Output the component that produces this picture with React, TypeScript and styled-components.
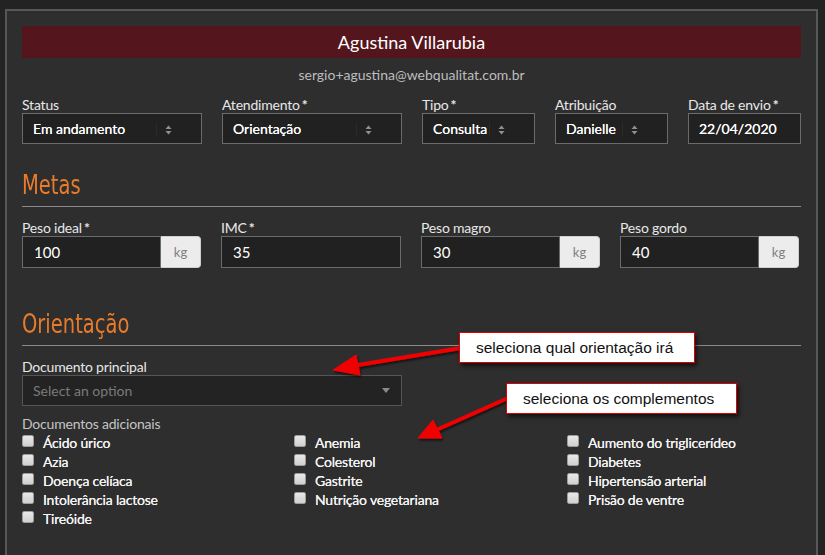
import React from "react";
import styled, { createGlobalStyle } from "styled-components";

const GlobalStyle = createGlobalStyle`
  html, body {
    margin: 0;
    padding: 0;
    background: #232323;
    font-family: Lato, "Open Sans", sans-serif;
    color: #e6e6e6;
  }
`;

const Page = styled.div`
  position: relative;
  padding: 9px 7px 0 5px;
  height: 555px;
  box-sizing: border-box;
  overflow: hidden;
`;

const Panel = styled.div`
  background: #2e2e2e;
  border: 2px solid #575757;
  border-bottom: none;
  padding: 15px 15px 40px;
  height: 600px;
  box-sizing: border-box;
`;

const NameBar = styled.div`
  height: 32px;
  background: #54161c;
  color: #fff;
  font-size: 18px;
  display: flex;
  align-items: center;
  justify-content: center;
`;

const Email = styled.div`
  text-align: center;
  font-size: 14px;
  color: #bdbdbd;
  margin-top: 9px;
  line-height: 16px;
`;

const FieldGrid = styled.div<{ $cols: string; $top: number }>`
  display: grid;
  grid-template-columns: ${({ $cols }) => $cols};
  column-gap: 20px;
  margin-top: ${({ $top }) => $top}px;
`;

const Field = styled.div<{ $top?: number }>`
  display: flex;
  flex-direction: column;
  margin-top: ${({ $top = 0 }) => $top}px;
`;

const Label = styled.label`
  font-size: 14px;
  line-height: 16px;
  color: #e8e8e8;
  height: 16px;
  letter-spacing: -0.2px;

  b {
    font-weight: bold;
    margin-left: 2px;
  }
`;

const SelectBox = styled.div`
  position: relative;
  height: 31px;
  box-sizing: border-box;
  border: 1px solid #6b6b6b;
  background: #212121;
  color: #fff;
  font-size: 14px;
  display: flex;
  align-items: center;
  padding-left: 10px;
  text-shadow: 0 0 0.4px #fff;
`;

const SelectSep = styled.span`
  position: absolute;
  right: 44px;
  top: 8px;
  width: 1px;
  height: 15px;
  background: #2a2a2a;
`;

const SelectArrows = styled.svg`
  position: absolute;
  right: 29px;
  top: 11px;
`;

const InputGroup = styled.div`
  display: flex;
  height: 32px;
`;

const TextInput = styled.div`
  flex: 1;
  box-sizing: border-box;
  border: 1px solid #6b6b6b;
  background: #212121;
  color: #fff;
  font-size: 15px;
  display: flex;
  align-items: center;
  padding-left: 11px;
`;

const Addon = styled.div`
  width: 40px;
  box-sizing: border-box;
  background: #ececec;
  color: #808080;
  border: 1px solid #cfcfcf;
  border-left: none;
  border-radius: 0 4px 4px 0;
  font-size: 13px;
  display: flex;
  align-items: center;
  justify-content: center;
`;

const SectionTitle = styled.h2<{ $top: number }>`
  margin: ${({ $top }) => $top}px 0 0;
  padding-bottom: 6px;
  border-bottom: 1px solid #8a8a8a;
  color: #e97b2b;
  font-family: "DejaVu Sans", sans-serif;
  font-weight: normal;
  font-size: 26px;
  line-height: 30px;

  span {
    display: inline-block;
    transform: scaleX(0.75);
    transform-origin: left center;
  }
`;

const Select2 = styled.div`
  position: relative;
  width: 380px;
  height: 31px;
  box-sizing: border-box;
  border: 1px solid #555;
  background: #232323;
  color: #7a7a7a;
  font-size: 14px;
  display: flex;
  align-items: center;
  padding-left: 10px;
`;

const Caret = styled.span`
  position: absolute;
  right: 11px;
  top: 12px;
  width: 0;
  height: 0;
  border-left: 4px solid transparent;
  border-right: 4px solid transparent;
  border-top: 5px solid #8a8a8a;
`;

const SubLabel = styled.div`
  font-size: 14px;
  line-height: 16px;
  color: #c4c4c4;
  margin-top: 10px;
  letter-spacing: -0.2px;
`;

const CheckGrid = styled.div`
  display: grid;
  grid-template-columns: 272px 273px auto;
  margin-top: 1px;
`;

const CheckColumn = styled.div`
  display: flex;
  flex-direction: column;
`;

const CheckRow = styled.div`
  display: flex;
  align-items: center;
  height: 19px;
  font-size: 14px;
  letter-spacing: -0.2px;
  color: #f2f2f2;
  text-shadow: 0 0 0.4px #fff;
`;

const CheckSquare = styled.span`
  width: 12px;
  height: 12px;
  box-sizing: border-box;
  border: 1px solid #9d9d9d;
  border-radius: 2px;
  background: linear-gradient(#e8e8e8, #d0d0d0);
  margin-right: 9px;
  margin-top: -4px;
`;

const Callout = styled.div<{ $x: number; $y: number; $w: number }>`
  position: absolute;
  left: ${({ $x }) => $x}px;
  top: ${({ $y }) => $y}px;
  width: ${({ $w }) => $w}px;
  height: 31px;
  box-sizing: border-box;
  background: #fff;
  border: 1px solid #e00000;
  box-shadow: 2px 3px 4px rgba(0, 0, 0, 0.6);
  color: #111;
  font-family: "Liberation Sans", Arial, sans-serif;
  font-size: 15.5px;
  display: flex;
  align-items: center;
  padding-left: 16px;
`;

const Overlay = styled.svg`
  position: absolute;
  left: 0;
  top: 0;
  pointer-events: none;
`;

const Arrows = () => (
  <SelectArrows width="7" height="10" viewBox="0 0 7 10">
    <path d="M0.5 4 L3.5 0.5 L6.5 4 Z" fill="#8f8f8f" />
    <path d="M0.5 6 L3.5 9.5 L6.5 6 Z" fill="#8f8f8f" />
  </SelectArrows>
);

const Select = ({ value }: { value: string }) => (
  <SelectBox>
    {value}
    <SelectSep />
    <Arrows />
  </SelectBox>
);

const Req = ({ text }: { text: string }) => (
  <Label>
    {text}
    <b>*</b>
  </Label>
);

const checks = [
  ["Ácido úrico", "Azia", "Doença celíaca", "Intolerância lactose", "Tireóide"],
  ["Anemia", "Colesterol", "Gastrite", "Nutrição vegetariana"],
  ["Aumento do triglicerídeo", "Diabetes", "Hipertensão arterial", "Prisão de ventre"],
];

export default function App() {
  return (
    <>
      <GlobalStyle />
      <Page>
        <Panel>
          <NameBar>Agustina Villarubia</NameBar>
          <Email>sergio+agustina@webqualitat.com.br</Email>

          <FieldGrid $cols="180px 180px 113px 113px 113px" $top={14}>
            <Field>
              <Label>Status</Label>
              <Select value="Em andamento" />
            </Field>
            <Field>
              <Req text="Atendimento" />
              <Select value="Orientação" />
            </Field>
            <Field>
              <Req text="Tipo" />
              <Select value="Consulta" />
            </Field>
            <Field>
              <Label>Atribuição</Label>
              <Select value="Danielle" />
            </Field>
            <Field>
              <Req text="Data de envio" />
              <SelectBox>22/04/2020</SelectBox>
            </Field>
          </FieldGrid>

          <SectionTitle $top={26}>
            <span>Metas</span>
          </SectionTitle>

          <FieldGrid $cols="179px 180px 179px 179px" $top={13}>
            <Field>
              <Req text="Peso ideal" />
              <InputGroup>
                <TextInput>100</TextInput>
                <Addon>kg</Addon>
              </InputGroup>
            </Field>
            <Field>
              <Req text="IMC" />
              <InputGroup>
                <TextInput>35</TextInput>
              </InputGroup>
            </Field>
            <Field>
              <Label>Peso magro</Label>
              <InputGroup>
                <TextInput>30</TextInput>
                <Addon>kg</Addon>
              </InputGroup>
            </Field>
            <Field>
              <Label>Peso gordo</Label>
              <InputGroup>
                <TextInput>40</TextInput>
                <Addon>kg</Addon>
              </InputGroup>
            </Field>
          </FieldGrid>

          <SectionTitle $top={41}>
            <span>Orientação</span>
          </SectionTitle>

          <Field $top={13}>
            <Label>Documento principal</Label>
            <Select2>
              Select an option
              <Caret />
            </Select2>
          </Field>

          <SubLabel>Documentos adicionais</SubLabel>
          <CheckGrid>
            {checks.map((col, i) => (
              <CheckColumn key={i}>
                {col.map((c) => (
                  <CheckRow key={c}>
                    <CheckSquare />
                    {c}
                  </CheckRow>
                ))}
              </CheckColumn>
            ))}
          </CheckGrid>
        </Panel>

        <Overlay width="825" height="555" viewBox="0 0 825 555">
          <defs>
            <filter id="sh" x="-20%" y="-50%" width="140%" height="200%">
              <feDropShadow dx="1" dy="2" stdDeviation="1.2" floodColor="#000" floodOpacity="0.6" />
            </filter>
          </defs>
          <g filter="url(#sh)" fill="#f00000" stroke="#f00000">
            <line x1="461" y1="348" x2="352" y2="366" strokeWidth="4" strokeLinecap="round" />
            <path d="M333 370 L356 355 L360 375 Z" strokeWidth="1" />
            <line x1="508" y1="398" x2="434" y2="431" strokeWidth="4" strokeLinecap="round" />
            <path d="M418 438 L433 420 L442 438 Z" strokeWidth="1" />
          </g>
        </Overlay>
        <Callout $x={459} $y={332} $w={236}>seleciona qual orientação irá</Callout>
        <Callout $x={506} $y={383} $w={231}>seleciona os complementos</Callout>
      </Page>
    </>
  );
}
